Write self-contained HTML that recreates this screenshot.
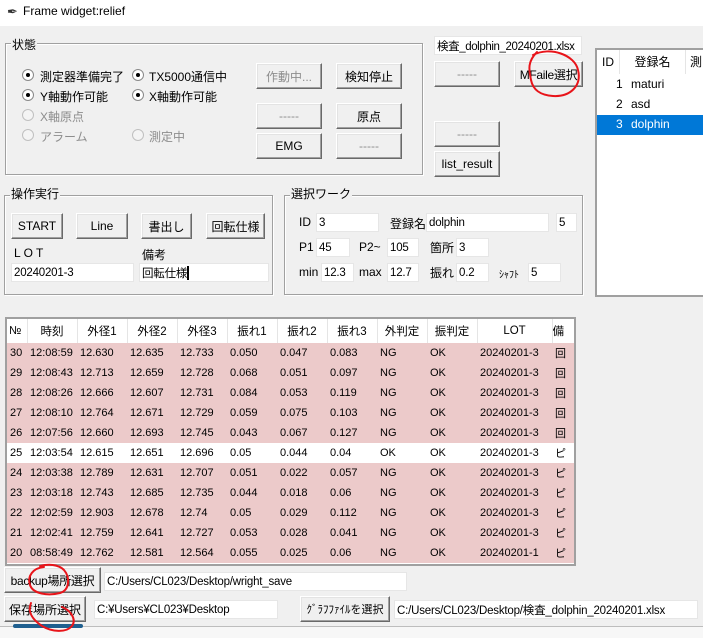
<!DOCTYPE html>
<html><head><meta charset="utf-8"><style>
*{box-sizing:border-box;margin:0;padding:0}
body{width:703px;height:638px;background:#f0f0f0;font-family:"Liberation Sans","Noto Sans CJK JP",sans-serif;font-size:12px;color:#000;position:relative;overflow:hidden}
.a{position:absolute;white-space:nowrap}
.title{left:0;top:0;width:703px;height:26px;background:#fff}
.btn{position:absolute;border:1px solid;border-color:#fff #696969 #696969 #fff;box-shadow:inset -1px -1px 0 #a0a0a0,inset 1px 1px 0 #e3e3e3;background:#f0f0f0;display:flex;align-items:center;justify-content:center;white-space:nowrap;font-size:12px}
.dis{color:#8d8d8d}
.ent{position:absolute;background:#fff;border:1px solid #e6e6e6;padding-left:2px;display:flex;align-items:center;white-space:nowrap;overflow:hidden;font-size:11.5px;letter-spacing:-0.2px}
.fr{position:absolute;border:1px solid #a0a0a0;box-shadow:1px 1px 0 #fff,inset 1px 1px 0 #fff}
.lbl{position:absolute;background:#f0f0f0;padding:0 1px;line-height:14px}
.rd{position:absolute;width:12px;height:12px;border-radius:50%;background:#fff;border:1px solid #8a8a8a}
.rd.on::after{content:"";position:absolute;left:3px;top:3px;width:4px;height:4px;border-radius:50%;background:#000}
.rd.off{border-color:#c0c0c0;background:#f4f4f4}
table{border-collapse:collapse;table-layout:fixed}
td{height:20px;padding:0 0 0 3px;white-space:nowrap;overflow:hidden;font-size:11px}
th{height:24px;font-weight:normal;border-right:1px solid #e5e5e5;background:#fff;white-space:nowrap;overflow:hidden;font-size:11.5px}
tr.p td{background:#eccaca}
tr.w td{background:#fff}
</style></head><body>
<div class="a title"></div>
<div class="a" style="left:7px;top:4px;font-size:13px;color:#333">&#x2712;</div>
<div class="a" style="left:23px;top:4px;font-size:12px">Frame widget:relief</div>

<div class="fr" style="left:5px;top:43px;width:418px;height:132px"></div>
<div class="lbl" style="left:11px;top:38px">状態</div>
<div class="rd on" style="left:22px;top:69px"></div><div class="a" style="left:40px;top:68px">測定器準備完了</div>
<div class="rd on" style="left:132px;top:69px"></div><div class="a" style="left:149px;top:68px">TX5000通信中</div>
<div class="rd on" style="left:22px;top:89px"></div><div class="a" style="left:40px;top:88px">Y軸動作可能</div>
<div class="rd on" style="left:132px;top:89px"></div><div class="a" style="left:149px;top:88px">X軸動作可能</div>
<div class="rd off" style="left:22px;top:109px"></div><div class="a dis" style="left:40px;top:108px">X軸原点</div>
<div class="rd off" style="left:22px;top:129px"></div><div class="a dis" style="left:40px;top:128px">アラーム</div>
<div class="rd off" style="left:132px;top:129px"></div><div class="a dis" style="left:149px;top:128px">測定中</div>
<div class="btn dis" style="left:256px;top:63px;width:66px;height:26px">作動中...</div>
<div class="btn" style="left:336px;top:63px;width:66px;height:26px">検知停止</div>
<div class="btn dis" style="left:256px;top:103px;width:66px;height:26px">-----</div>
<div class="btn" style="left:336px;top:103px;width:66px;height:26px">原点</div>
<div class="btn" style="left:256px;top:133px;width:66px;height:26px">EMG</div>
<div class="btn dis" style="left:336px;top:133px;width:66px;height:26px">-----</div>

<div class="ent" style="left:434px;top:36px;width:148px;height:19px;letter-spacing:-0.4px">検査_dolphin_20240201.xlsx</div>
<div class="btn dis" style="left:434px;top:61px;width:66px;height:26px">-----</div>
<div class="btn" style="left:514px;top:61px;width:69px;height:26px;letter-spacing:-0.3px">MFaile選択</div>
<div class="btn dis" style="left:434px;top:121px;width:66px;height:26px">-----</div>
<div class="btn" style="left:434px;top:151px;width:66px;height:26px">list_result</div>

<div class="a" style="left:595px;top:48px;width:110px;height:249px;background:#fff;border:2px solid #a0a0a0;border-right:none"></div>
<div class="a" style="left:597px;top:50px;width:23px;height:24px;border-right:1px solid #e5e5e5;text-align:center;line-height:24px">ID</div>
<div class="a" style="left:620px;top:50px;width:66px;height:24px;border-right:1px solid #e5e5e5;text-align:center;line-height:24px">登録名</div>
<div class="a" style="left:690px;top:50px;line-height:24px">測</div>
<div class="a" style="left:616px;top:77px">1</div><div class="a" style="left:631px;top:77px">maturi</div>
<div class="a" style="left:616px;top:97px">2</div><div class="a" style="left:631px;top:97px">asd</div>
<div class="a" style="left:597px;top:115px;width:106px;height:20px;background:#0078d7"></div>
<div class="a" style="left:616px;top:117px;color:#fff">3</div><div class="a" style="left:631px;top:117px;color:#fff">dolphin</div>

<div class="fr" style="left:4px;top:195px;width:269px;height:100px"></div>
<div class="lbl" style="left:10px;top:187px">操作実行</div>
<div class="btn" style="left:11px;top:213px;width:52px;height:26px">START</div>
<div class="btn" style="left:76px;top:213px;width:52px;height:26px">Line</div>
<div class="btn" style="left:141px;top:213px;width:51px;height:26px">書出し</div>
<div class="btn" style="left:206px;top:213px;width:59px;height:26px">回転仕様</div>
<div class="a" style="left:14px;top:246px;letter-spacing:3px">LOT</div>
<div class="a" style="left:142px;top:246px">備考</div>
<div class="ent" style="left:11px;top:263px;width:123px;height:19px">20240201-3</div>
<div class="ent" style="left:139px;top:263px;width:130px;height:19px">回転仕様<span style="display:inline-block;width:2px;height:14px;background:#000"></span></div>

<div class="fr" style="left:284px;top:195px;width:299px;height:100px"></div>
<div class="lbl" style="left:290px;top:187px">選択ワーク</div>
<div class="a" style="left:299px;top:215px">ID</div><div class="ent" style="left:316px;top:213px;width:63px;height:19px">3</div>
<div class="a" style="left:390px;top:215px">登録名</div><div class="ent" style="left:426px;top:213px;width:123px;height:19px">dolphin</div>
<div class="ent" style="left:556px;top:213px;width:21px;height:19px">5</div>
<div class="a" style="left:299px;top:240px">P1</div><div class="ent" style="left:316px;top:238px;width:34px;height:19px">45</div>
<div class="a" style="left:359px;top:240px">P2~</div><div class="ent" style="left:387px;top:238px;width:32px;height:19px">105</div>
<div class="a" style="left:430px;top:239px">箇所</div><div class="ent" style="left:456px;top:238px;width:33px;height:19px">3</div>
<div class="a" style="left:299px;top:265px">min</div><div class="ent" style="left:321px;top:263px;width:33px;height:19px">12.3</div>
<div class="a" style="left:359px;top:265px">max</div><div class="ent" style="left:387px;top:263px;width:32px;height:19px">12.7</div>
<div class="a" style="left:430px;top:264px">振れ</div><div class="ent" style="left:456px;top:263px;width:33px;height:19px">0.2</div>
<div class="a" style="left:499px;top:266px;font-size:10px">ｼｬﾌﾄ</div><div class="ent" style="left:528px;top:263px;width:33px;height:19px">5</div>

<div class="a" style="left:5px;top:317px;width:571px;height:249px;border:2px solid #a0a0a0;background:#fff;overflow:hidden">
<table style="width:567px">
<colgroup><col style="width:20px"><col style="width:50px"><col style="width:50px"><col style="width:50px"><col style="width:50px"><col style="width:50px"><col style="width:50px"><col style="width:50px"><col style="width:50px"><col style="width:50px"><col style="width:75px"><col style="width:22px"></colgroup>
<tr><th style="text-align:left;padding-left:2px">№</th><th>時刻</th><th>外径1</th><th>外径2</th><th>外径3</th><th>振れ1</th><th>振れ2</th><th>振れ3</th><th>外判定</th><th>振判定</th><th>LOT</th><th style="text-align:left">備</th></tr>
<tr class="p"><td>30</td><td>12:08:59</td><td>12.630</td><td>12.635</td><td>12.733</td><td>0.050</td><td>0.047</td><td>0.083</td><td>NG</td><td>OK</td><td>20240201-3</td><td>回</td></tr>
<tr class="p"><td>29</td><td>12:08:43</td><td>12.713</td><td>12.659</td><td>12.728</td><td>0.068</td><td>0.051</td><td>0.097</td><td>NG</td><td>OK</td><td>20240201-3</td><td>回</td></tr>
<tr class="p"><td>28</td><td>12:08:26</td><td>12.666</td><td>12.607</td><td>12.731</td><td>0.084</td><td>0.053</td><td>0.119</td><td>NG</td><td>OK</td><td>20240201-3</td><td>回</td></tr>
<tr class="p"><td>27</td><td>12:08:10</td><td>12.764</td><td>12.671</td><td>12.729</td><td>0.059</td><td>0.075</td><td>0.103</td><td>NG</td><td>OK</td><td>20240201-3</td><td>回</td></tr>
<tr class="p"><td>26</td><td>12:07:56</td><td>12.660</td><td>12.693</td><td>12.745</td><td>0.043</td><td>0.067</td><td>0.127</td><td>NG</td><td>OK</td><td>20240201-3</td><td>回</td></tr>
<tr class="w"><td>25</td><td>12:03:54</td><td>12.615</td><td>12.651</td><td>12.696</td><td>0.05</td><td>0.044</td><td>0.04</td><td>OK</td><td>OK</td><td>20240201-3</td><td>ピ</td></tr>
<tr class="p"><td>24</td><td>12:03:38</td><td>12.789</td><td>12.631</td><td>12.707</td><td>0.051</td><td>0.022</td><td>0.057</td><td>NG</td><td>OK</td><td>20240201-3</td><td>ピ</td></tr>
<tr class="p"><td>23</td><td>12:03:18</td><td>12.743</td><td>12.685</td><td>12.735</td><td>0.044</td><td>0.018</td><td>0.06</td><td>NG</td><td>OK</td><td>20240201-3</td><td>ピ</td></tr>
<tr class="p"><td>22</td><td>12:02:59</td><td>12.903</td><td>12.678</td><td>12.74</td><td>0.05</td><td>0.029</td><td>0.112</td><td>NG</td><td>OK</td><td>20240201-3</td><td>ピ</td></tr>
<tr class="p"><td>21</td><td>12:02:41</td><td>12.759</td><td>12.641</td><td>12.727</td><td>0.053</td><td>0.028</td><td>0.041</td><td>NG</td><td>OK</td><td>20240201-3</td><td>ピ</td></tr>
<tr class="p"><td>20</td><td>08:58:49</td><td>12.762</td><td>12.581</td><td>12.564</td><td>0.055</td><td>0.025</td><td>0.06</td><td>NG</td><td>OK</td><td>20240201-1</td><td>ピ</td></tr>
</table></div>

<div class="btn" style="left:4px;top:567px;width:97px;height:26px;letter-spacing:-0.3px">backup場所選択</div>
<div class="ent" style="left:104px;top:572px;width:303px;height:19px">C:/Users/CL023/Desktop/wright_save</div>
<div class="btn" style="left:4px;top:596px;width:82px;height:26px">保存場所選択</div>
<div class="ent" style="left:94px;top:600px;width:184px;height:19px">C:¥Users¥CL023¥Desktop</div>
<div class="btn" style="left:300px;top:596px;width:90px;height:26px;font-size:11px">ｸﾞﾗﾌﾌｧｲﾙを選択</div>
<div class="ent" style="left:394px;top:600px;width:304px;height:19px">C:/Users/CL023/Desktop/検査_dolphin_20240201.xlsx</div>
<div class="a" style="left:0;top:626px;width:703px;height:12px;background:#f7f7f7;border-top:1px solid #bdbdbd"></div>
<div class="a" style="left:13px;top:624px;width:70px;height:4px;background:#1f5f8f;border-radius:2px"></div>

<svg class="a" style="left:0;top:0" width="703" height="638" viewBox="0 0 703 638">
<g fill="none" stroke="#e8141a" stroke-width="2" stroke-linecap="round">
<path d="M533 55 C550 46 575 55 578 70 C582 86 570 97 553 96 C540 95 533 90 531 80 C529 70 527 62 537 52"/>
<path d="M44 567 C33 568 27 576 30 585 C33 594 48 596 60 593 C70 590 70 577 64 570 C58 564 48 564 40 566"/>
<path d="M31 603 C27 612 33 620 42 626 C52 632 66 633 72 626 C77 619 70 610 62 607"/>
</g></svg>
</body></html>
